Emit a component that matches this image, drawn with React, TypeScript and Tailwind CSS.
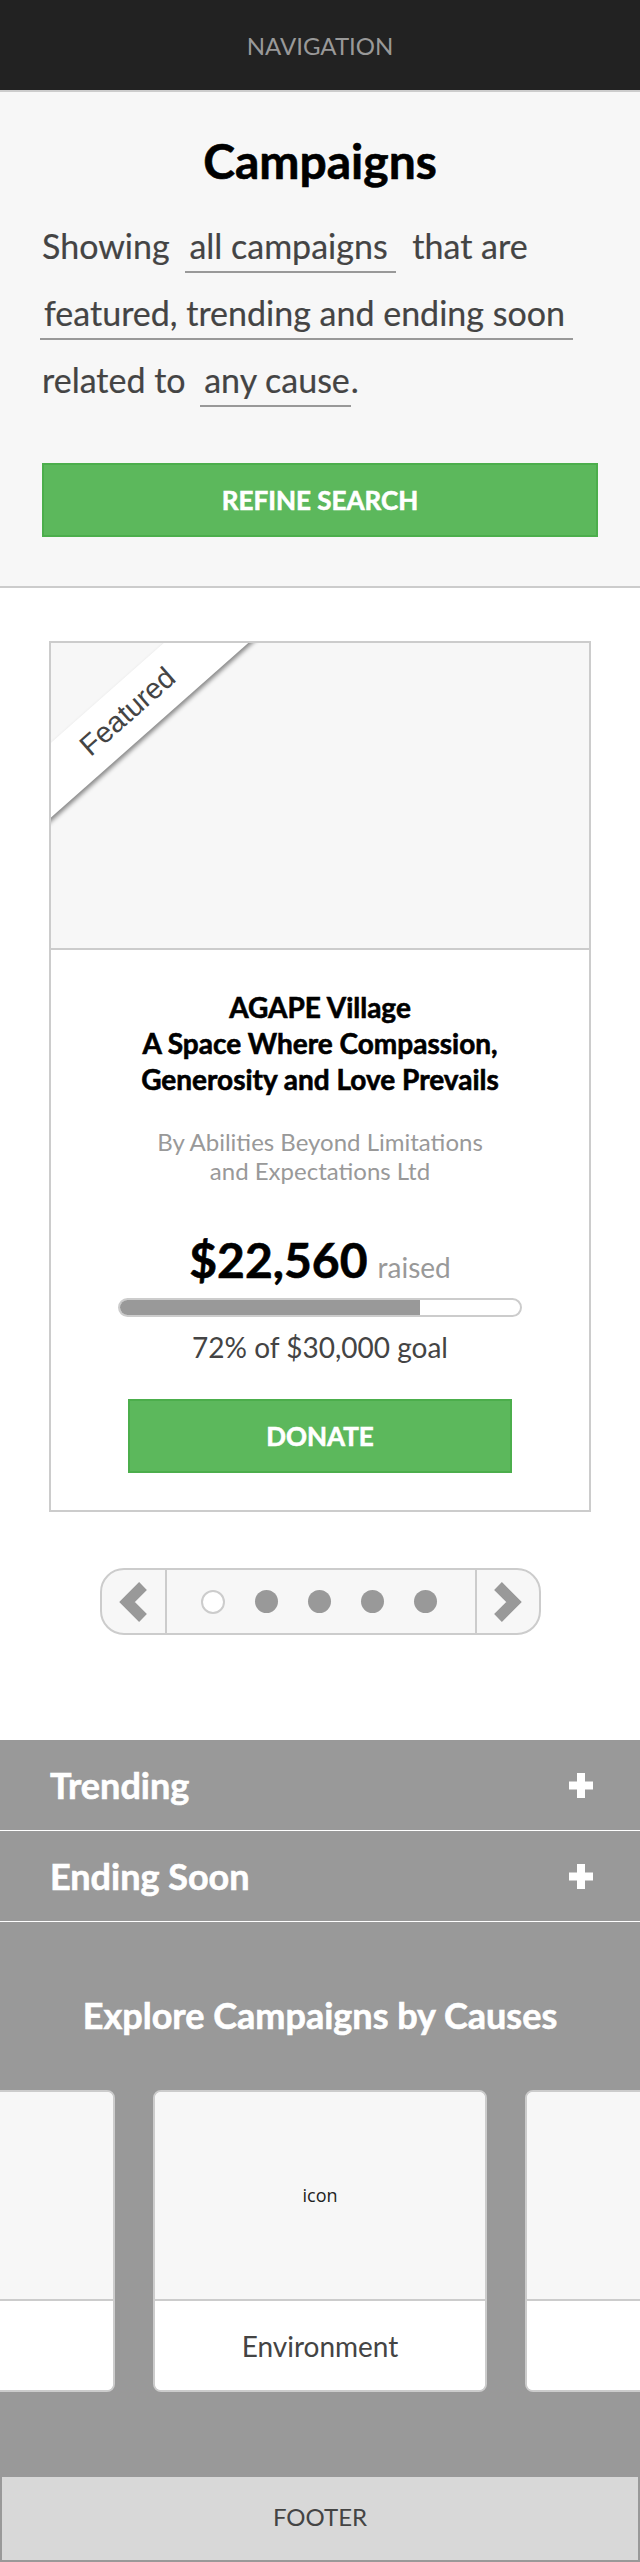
import React from "react";

const sel =
  "inline-block leading-[50px] border-b-2 border-[#999] pl-[4px] pr-[8px]";

const heavy = "font-bold [-webkit-text-stroke:0.6px_currentColor]";

function Chevron({ dir }: { dir: "left" | "right" }) {
  return (
    <svg width="30" height="40" viewBox="0 0 30 40">
      <polyline
        points={dir === "left" ? "25,4 9,20 25,36" : "5,4 21,20 5,36"}
        fill="none"
        stroke="#999"
        strokeWidth="11"
        strokeLinecap="butt"
        strokeLinejoin="miter"
      />
    </svg>
  );
}

function Plus() {
  return (
    <svg width="24" height="25" viewBox="0 0 24 25">
      <rect x="8" y="0" width="8" height="25" fill="#fff" />
      <rect x="0" y="8.5" width="24" height="8" fill="#fff" />
    </svg>
  );
}

function CauseCard({ label, icon }: { label?: string; icon?: boolean }) {
  return (
    <div className="w-[334px] h-[302px] flex-none rounded-[8px] border-2 border-[#ccc] overflow-hidden flex flex-col bg-white">
      <div className="h-[209px] bg-[#f7f7f7] border-b-2 border-[#ccc] flex items-center justify-center font-['Open_Sans',sans-serif] text-[18px] text-[#222]">
        {icon ? "icon" : null}
      </div>
      <div className="flex-1 bg-white flex items-center justify-center text-[28px] text-[#444]">
        {label}
      </div>
    </div>
  );
}

export default function App() {
  return (
    <div className="w-[640px] bg-white font-['Lato',sans-serif]">
      <header className="h-[92px] bg-[#222] border-b-2 border-[#ccc] flex items-center justify-center pt-[2px] text-[24px] text-[#999]">
        NAVIGATION
      </header>

      <section className="bg-[#f7f7f7] border-b-2 border-[#ccc] pt-[40px] pb-[49px]">
        <h1 className={"text-center text-[48px] leading-[58px] text-black " + heavy}>
          Campaigns
        </h1>
        <p className="mt-[22px] pl-[42px] pr-[38px] text-[34px] leading-[67px] text-[#444] [-webkit-text-stroke:0.2px_currentColor]">
          Showing <span className={sel + " ml-[7px] mr-[8px]"}>all campaigns</span>{" "}
          that are <span className={sel + " -ml-[2px]"}>featured, trending and ending soon</span>{" "}
          related to <span className={sel + " ml-[6px] !pr-[1px]"}>any cause</span>.
        </p>
        <div className={"mt-[50px] mx-[42px] h-[74px] bg-[#5cb85c] border-2 border-[#4cae4c] flex items-center justify-center text-white text-[26px] " + heavy}>
          REFINE SEARCH
        </div>
      </section>

      <main className="pt-[53px] pb-[105px]">
        <div className="mx-[49px] border-2 border-[#ccc] bg-white relative overflow-hidden">
          <div className="h-[307px] bg-[#f7f7f7] border-b-2 border-[#ccc]" />
          <div className="absolute left-[-83px] top-[41px] w-[320px] h-[56px] bg-white rotate-[-41.5deg] shadow-[0_3px_4px_rgba(0,0,0,0.45)] flex items-center justify-center font-['Liberation_Sans',sans-serif] text-[29px] text-[#444]">
            Featured
          </div>
          <div className="pt-[39px] pb-[37px] text-center">
            <h2 className={"text-[28px] leading-[36px] text-black " + heavy}>
              AGAPE Village
              <br />
              A Space Where Compassion,
              <br />
              Generosity and Love Prevails
            </h2>
            <p className="mt-[30px] text-[24px] leading-[29px] text-[#999]">
              By Abilities Beyond Limitations
              <br />
              and Expectations Ltd
            </p>
            <p className="mt-[51px] text-[48px] leading-[48px]">
              <span className={"text-black " + heavy}>$22,560</span>
              <span className="ml-[10px] text-[28px] leading-[28px] text-[#999]">raised</span>
            </p>
            <div className="mt-[14px] mx-[67px] h-[19px] rounded-full border-2 border-[#ccc] bg-white overflow-hidden">
              <div className="h-full w-[75%] bg-[#999]" />
            </div>
            <p className="mt-[12px] text-[28px] leading-[36px] text-[#444]">
              72% of $30,000 goal
            </p>
            <div className={"mt-[34px] mx-auto w-[384px] h-[74px] bg-[#5cb85c] border-2 border-[#4cae4c] flex items-center justify-center text-white text-[26px] " + heavy}>
              DONATE
            </div>
          </div>
        </div>

        <div className="mt-[56px] mx-auto w-[441px] h-[67px] rounded-[24px] border-2 border-[#ccc] bg-[#f7f7f7] flex overflow-hidden">
          <div className="w-[65px] border-r-2 border-[#ccc] flex items-center justify-center">
            <Chevron dir="left" />
          </div>
          <div className="flex-1 flex items-center justify-center gap-[30px] pr-[4px]">
            <span className="w-[24px] h-[24px] rounded-full bg-white border-2 border-[#ccc]" />
            <span className="w-[23px] h-[23px] rounded-full bg-[#999]" />
            <span className="w-[23px] h-[23px] rounded-full bg-[#999]" />
            <span className="w-[23px] h-[23px] rounded-full bg-[#999]" />
            <span className="w-[23px] h-[23px] rounded-full bg-[#999]" />
          </div>
          <div className="w-[64px] border-l-2 border-[#ccc] flex items-center justify-center">
            <Chevron dir="right" />
          </div>
        </div>
      </main>

      <div className="bg-[#999]">
        <div className={"h-[91px] border-b border-white flex items-center justify-between pl-[50px] pr-[47px] text-white text-[36px] " + heavy}>
          <span>Trending</span>
          <Plus />
        </div>
        <div className={"h-[91px] border-b border-white flex items-center justify-between pl-[50px] pr-[47px] text-white text-[36px] " + heavy}>
          <span>Ending Soon</span>
          <Plus />
        </div>
        <div className="pt-[71px] pb-[83px]">
          <h3 className={"text-center text-white text-[36px] leading-[44px] " + heavy}>
            Explore Campaigns by Causes
          </h3>
          <div className="mt-[53px] flex justify-center gap-[38px] overflow-hidden">
            <CauseCard />
            <CauseCard label="Environment" icon />
            <CauseCard />
          </div>
        </div>
      </div>

      <footer className="h-[87px] bg-[#d8d8d8] border-2 border-[#999] flex items-center justify-center pb-[4px] text-[24px] text-[#444]">
        FOOTER
      </footer>
    </div>
  );
}
